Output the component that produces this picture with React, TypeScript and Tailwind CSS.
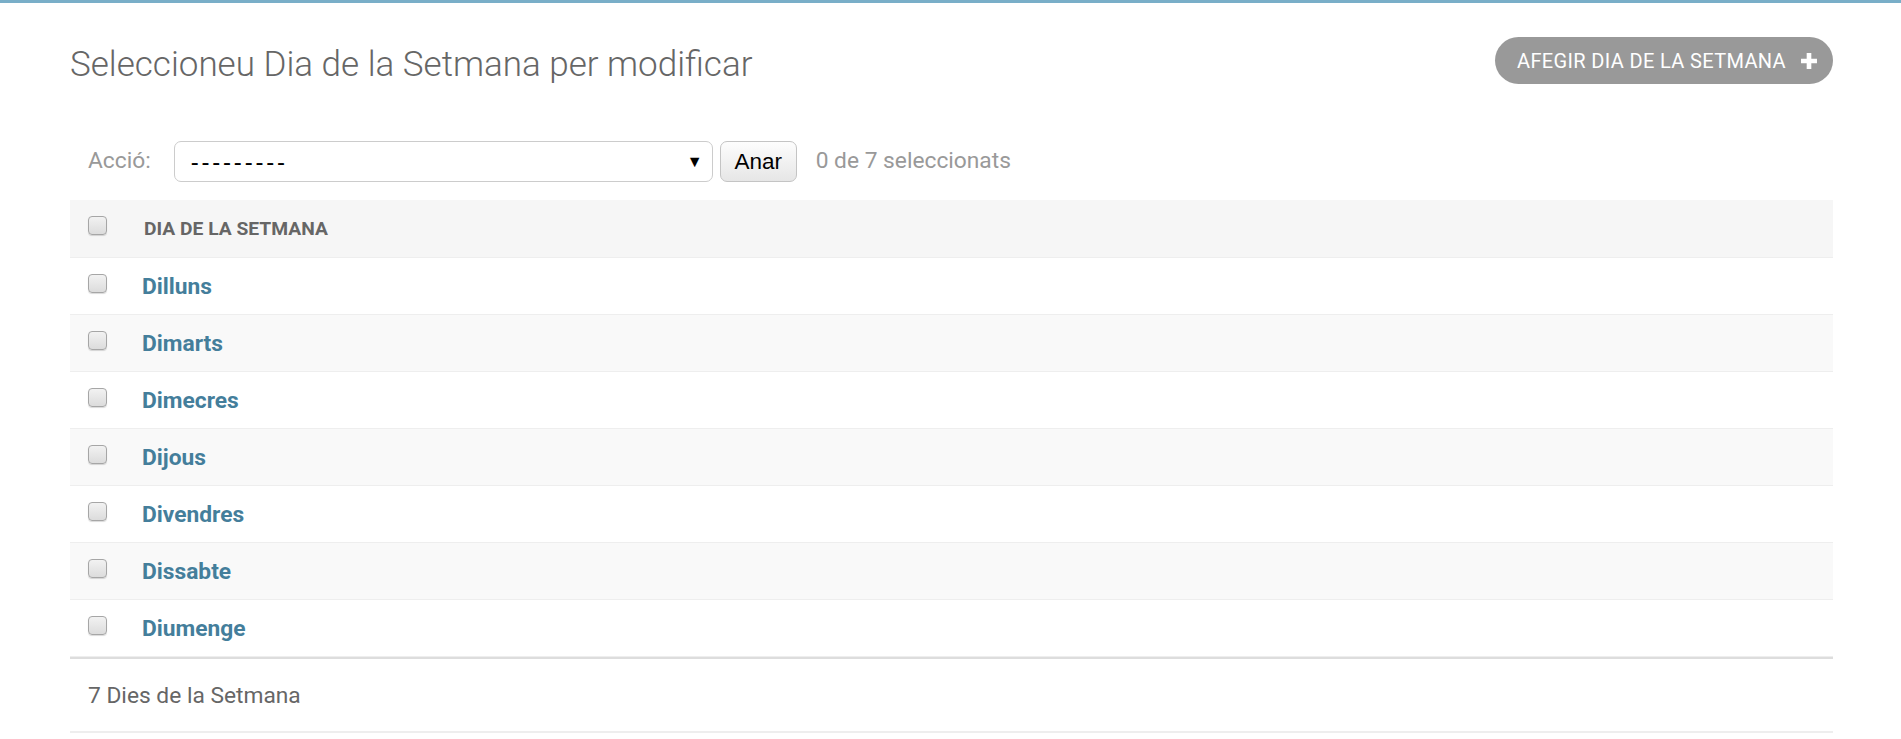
const days = ["Dilluns", "Dimarts", "Dimecres", "Dijous", "Divendres", "Dissabte", "Diumenge"];

function Check() {
  return (
    <span className="block h-[19px] w-[19px] rounded-[4px] border border-[#a6a6a6] bg-gradient-to-b from-[#f2f2f2] to-[#dcdcdc] shadow-[0_1px_1px_rgba(0,0,0,0.15)]" />
  );
}

function PlusIcon() {
  return (
    <svg width="18" height="18" viewBox="0 0 14 14" className="block">
      <path d="M5.2 0.8h3.6v4.4h4.4v3.6H8.8v4.4H5.2V8.8H0.8V5.2h4.4z" fill="#fff" />
    </svg>
  );
}

export default function App() {
  return (
    <div className="min-h-screen border-t-[3px] border-[#79aec8] bg-white font-['Roboto','Liberation_Sans',sans-serif]">
      <div className="px-[70px] pr-[68px] pt-[34px]">
        <div className="flex items-start justify-between">
          <h1 className="pt-[7px] text-[35px] font-light leading-[41px] text-[#666]">
            Seleccioneu Dia de la Setmana per modificar
          </h1>
          <a className="flex h-[47px] items-center gap-[14px] rounded-full bg-[#999] pl-[22px] pr-[15px] text-[20px] uppercase tracking-[0.35px] text-white">
            Afegir dia de la setmana
            <PlusIcon />
          </a>
        </div>

        <div className="mt-[38px] flex h-[77px] items-center px-[18px] text-[22.75px] text-[#999]">
          <span>Acció:</span>
          <div className="ml-[23px] flex h-[41px] w-[539px] items-center justify-between rounded-[7px] border border-[#ccc] bg-white pl-[16px] pr-[9px] font-['Liberation_Sans',sans-serif] text-[24px] text-black">
            <span className="tracking-[2.8px]">---------</span>
            <span className="text-[16px]">▼</span>
          </div>
          <button className="ml-[7px] h-[41px] w-[77px] rounded-[7px] border border-[#c4c4c4] bg-gradient-to-b from-[#fdfdfd] to-[#e6e6e6] font-['Liberation_Sans',sans-serif] text-[22.5px] text-black">
            Anar
          </button>
          <span className="ml-[19px]">0 de 7 seleccionats</span>
        </div>

        <div className="flex h-[58px] items-center border-b border-[#eee] bg-[#f6f6f6]">
          <div className="w-[72px] pl-[18px] pb-[6px]">
            <Check />
          </div>
          <span className="pl-[2px] pt-[2px] text-[19.25px] font-bold uppercase text-[#666]">Dia de la setmana</span>
        </div>

        {days.map((d, i) => (
          <div
            key={d}
            className={`flex h-[57px] items-center border-b border-[#eee] ${i % 2 === 1 ? "bg-[#f9f9f9]" : "bg-white"}`}
          >
            <div className="w-[72px] pl-[18px] pb-[6px]">
              <Check />
            </div>
            <a className="pt-[2px] text-[22.75px] font-bold text-[#447e9b]">{d}</a>
          </div>
        ))}

        <div className="flex h-[76px] items-center border-t-[2px] border-b-[2px] border-t-[#ddd] border-b-[#eee] px-[18px] pt-[2px] text-[22.75px] text-[#666]">
          7 Dies de la Setmana
        </div>
      </div>
    </div>
  );
}
